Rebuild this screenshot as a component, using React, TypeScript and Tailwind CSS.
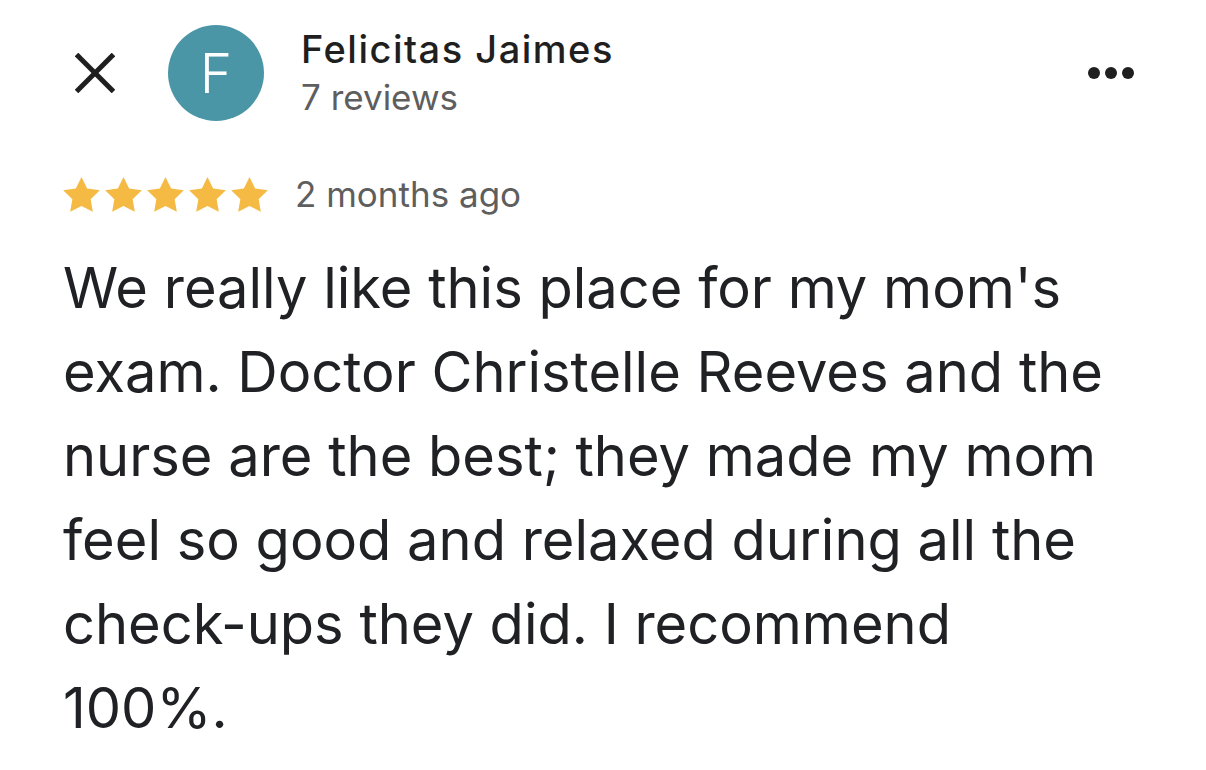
import React from "react";

const reviewLines = [
  "We really like this place for my mom's",
  "exam. Doctor Christelle Reeves and the",
  "nurse are the best; they made my mom",
  "feel so good and relaxed during all the",
  "check-ups they did. I recommend",
  "100%.",
];

const Star = () => (
  <svg viewBox="2 2 20 19.1" className="h-[35px] w-[37px]" fill="#F5BA43">
    <path d="M12 2l3.09 6.26L22 9.27l-5 4.87 1.18 6.88L12 17.77l-6.18 3.25L7 14.14 2 9.27l6.91-1.01L12 2z" />
  </svg>
);

export default function App() {
  return (
    <div className="min-h-screen w-full bg-white pl-[63px] pr-[72px] pt-[25px] font-['Inter',sans-serif] text-[#1f1f1f]">
      {/* header */}
      <div className="flex items-start">
        <button className="flex h-[96px] w-16 items-center justify-center">
          <svg viewBox="0 0 40 40" className="h-10 w-10" stroke="#1f1f1f" strokeWidth="5">
            <line x1="1.5" y1="1.5" x2="38.5" y2="38.5" />
            <line x1="38.5" y1="1.5" x2="1.5" y2="38.5" />
          </svg>
        </button>
        <div className="ml-[41px] flex h-[96px] w-[96px] items-center justify-center rounded-full bg-[#4A96A7]">
          <span className="text-[55px] font-light leading-none text-white">F</span>
        </div>
        <div className="ml-[37px] flex flex-col pt-[1px]">
          <span className="text-[38px] font-medium leading-[46px] tracking-[1.5px] text-[#1f1f1f]">
            Felicitas Jaimes
          </span>
          <span className="text-[35px] leading-[50px] text-[#5e5e5e]">7 reviews</span>
        </div>
        <div className="ml-auto flex h-[96px] items-center gap-[5px]">
          <span className="h-3 w-3 rounded-full bg-[#1f1f1f]" />
          <span className="h-3 w-3 rounded-full bg-[#1f1f1f]" />
          <span className="h-3 w-3 rounded-full bg-[#1f1f1f]" />
        </div>
      </div>

      {/* rating */}
      <div className="mt-[51px] flex h-[42px] items-center">
        <div className="flex items-center gap-[5px]">
          {[0, 1, 2, 3, 4].map((i) => (
            <Star key={i} />
          ))}
        </div>
        <span className="ml-[27px] text-[35px] leading-[42px] text-[#5e5e5e]">2 months ago</span>
      </div>

      {/* review text */}
      <p className="mt-[31px] text-[56px] leading-[84px] text-[#202124]">
        {reviewLines.map((line) => (
          <span key={line} className="block">
            {line}
          </span>
        ))}
      </p>
    </div>
  );
}
